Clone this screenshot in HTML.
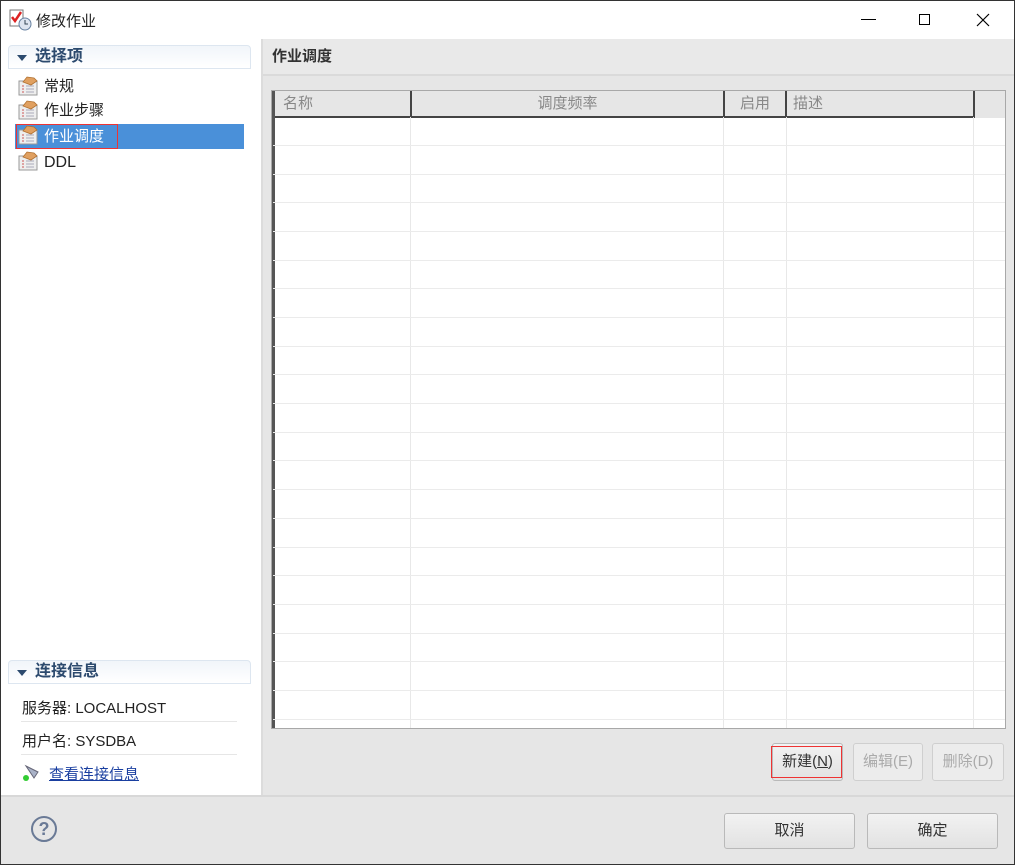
<!DOCTYPE html>
<html><head><meta charset="utf-8"><style>
*{margin:0;padding:0;box-sizing:border-box}
body{width:1015px;height:865px;position:relative;overflow:hidden;background:#fff;font-family:"Liberation Sans","Noto Sans CJK SC",sans-serif;font-size:15px;color:#222}
.a{position:absolute}
.sec{position:absolute;left:8px;width:243px;height:24px;border:1px solid #dde6f0;border-radius:4px 4px 0 0;background:linear-gradient(#f1f5fa,#fff);color:#2c4a6e;font-weight:bold;font-size:16px;padding-left:26px;line-height:22px}
.sec:before{content:"";position:absolute;left:8px;top:9px;border-left:5px solid transparent;border-right:5px solid transparent;border-top:6px solid #2c4a6e}
.it{position:absolute;left:44px;font-size:15px;line-height:20px}
.btn{position:absolute;height:38px;border:1px solid #b9b9b9;border-radius:3px;background:linear-gradient(#f2f2f2,#e2e2e2);text-align:center;line-height:36px;font-size:15px;color:#333}
.dis{background:#ececec;color:#aaa;border-color:#cfcfcf}
.hl{position:absolute;left:273px;width:732px;height:1px;background:#ebebeb}
.vl{position:absolute;top:117px;height:611px;width:1px;background:#e8e8e8}
.th{position:absolute;top:91px;height:27px;background:#e6e6e6;border-right:2px solid #444;border-bottom:2px solid #444;color:#888;font-size:15px;line-height:25px}
</style></head><body>
<div class="a" style="left:0;top:0;width:1015px;height:865px;border:1px solid #333"></div>
<!-- title -->
<svg class="a" style="left:9px;top:9px" width="24" height="22"><rect x="1" y="1" width="13" height="16" fill="#fff" stroke="#777"/><path d="M3 8l3 4 6-9" stroke="#d22" stroke-width="2.5" fill="none"/><circle cx="16" cy="15" r="6" fill="#dde4f0" stroke="#6680a0"/><path d="M16 11v4h3" stroke="#345" fill="none"/></svg>
<div class="a" style="left:36px;top:10px;font-size:15px">修改作业</div>
<div class="a" style="left:861px;top:19px;width:15px;height:1px;background:#000"></div>
<div class="a" style="left:919px;top:14px;width:11px;height:11px;border:1px solid #000"></div>
<svg class="a" style="left:976px;top:13px" width="14" height="14"><path d="M1 1l12 12M13 1L1 13" stroke="#000" stroke-width="1.2"/></svg>
<!-- left pane -->
<div class="sec" style="top:45px">选择项</div>
<svg width="0" height="0" style="position:absolute"><defs><g id="ic"><rect x="1" y="5" width="18" height="14" fill="#eee" stroke="#999"/><path d="M4 10h2M4 13h2M4 16h2" stroke="#c55"/><path d="M8 10h8M8 13h8M8 16h8" stroke="#aab"/><path d="M5 6l4-5 7 1 3 3-6 4z" fill="#e0a060" stroke="#b07030" stroke-width=".8"/></g></defs></svg>
<svg class="a" style="left:18px;top:76px" width="22" height="22"><use href="#ic"/></svg>
<div class="it" style="top:77px">常规</div>
<svg class="a" style="left:18px;top:100px" width="22" height="22"><use href="#ic"/></svg>
<div class="it" style="top:101px">作业步骤</div>
<div class="a" style="left:15px;top:124px;width:229px;height:25px;background:#4a90d9"></div>
<div class="a" style="left:16px;top:124px;width:102px;height:25px;border:1px solid #e33"></div>
<svg class="a" style="left:18px;top:125px" width="22" height="22"><use href="#ic"/></svg>
<div class="it" style="top:127px;color:#fff">作业调度</div>
<svg class="a" style="left:18px;top:151px" width="22" height="22"><use href="#ic"/></svg>
<div class="it" style="top:153px;font-size:16px">DDL</div>
<div class="sec" style="top:660px">连接信息</div>
<div class="a" style="left:22px;top:697px;font-size:15px">服务器: LOCALHOST</div>
<div class="a" style="left:21px;top:721px;width:216px;height:1px;background:#e6e6e6"></div>
<div class="a" style="left:22px;top:730px;font-size:15px">用户名: SYSDBA</div>
<div class="a" style="left:21px;top:754px;width:216px;height:1px;background:#e6e6e6"></div>
<svg class="a" style="left:22px;top:762px" width="22" height="20"><path d="M4 4l12 6-4 6z" fill="#aab3c8" stroke="#667"/><circle cx="4" cy="16" r="3" fill="#3c3"/></svg>
<div class="a" style="left:49px;top:763px;color:#1a3fa0;text-decoration:underline">查看连接信息</div>
<!-- right pane -->
<div class="a" style="left:261px;top:39px;width:753px;height:757px;background:#e6e6e6;border-left:2px solid #dcdcdc"></div>
<div class="a" style="left:263px;top:39px;width:751px;height:37px;background:#e9e9e9;border-bottom:2px solid #dadada"></div>
<div class="a" style="left:272px;top:45px;font-weight:bold;color:#333">作业调度</div>
<div class="a" style="left:271px;top:90px;width:735px;height:639px;background:#fff;border:1px solid #a8a8a8"></div>
<div class="a" style="left:272px;top:91px;width:3px;height:637px;background:#555"></div>
<div class="a" style="left:973px;top:91px;width:32px;height:27px;background:#e6e6e6"></div>
<div class="th" style="left:275px;width:137px;padding-left:8px">名称</div>
<div class="th" style="left:412px;width:313px;text-align:center">调度频率</div>
<div class="th" style="left:725px;width:62px;text-align:center">启用</div>
<div class="th" style="left:787px;width:188px;padding-left:6px">描述</div>
<div class="vl" style="left:410px"></div><div class="vl" style="left:723px"></div><div class="vl" style="left:786px"></div><div class="vl" style="left:973px"></div>
<div class="hl" style="top:145px"></div><div class="hl" style="top:174px"></div><div class="hl" style="top:202px"></div><div class="hl" style="top:231px"></div><div class="hl" style="top:260px"></div><div class="hl" style="top:288px"></div><div class="hl" style="top:317px"></div><div class="hl" style="top:346px"></div><div class="hl" style="top:374px"></div><div class="hl" style="top:403px"></div><div class="hl" style="top:432px"></div><div class="hl" style="top:460px"></div><div class="hl" style="top:489px"></div><div class="hl" style="top:518px"></div><div class="hl" style="top:547px"></div><div class="hl" style="top:575px"></div><div class="hl" style="top:604px"></div><div class="hl" style="top:633px"></div><div class="hl" style="top:661px"></div><div class="hl" style="top:690px"></div><div class="hl" style="top:719px"></div>
<div class="btn" style="left:772px;top:743px;width:71px">新建(<u>N</u>)</div>
<div class="a" style="left:771px;top:746px;width:71px;height:32px;border:1px solid #e33"></div>
<div class="btn dis" style="left:853px;top:743px;width:70px">编辑(E)</div>
<div class="btn dis" style="left:932px;top:743px;width:72px">删除(D)</div>
<!-- bottom -->
<div class="a" style="left:1px;top:795px;width:1013px;height:69px;background:#e6e6e6;border-top:2px solid #d8d8d8"></div>
<div class="a" style="left:31px;top:816px;width:26px;height:26px;border:2px solid #6a7a96;border-radius:50%;text-align:center;font-weight:bold;color:#6a7a96;font-size:18px;line-height:22px">?</div>
<div class="btn" style="left:724px;top:813px;width:131px;height:36px;line-height:34px">取消</div>
<div class="btn" style="left:867px;top:813px;width:131px;height:36px;line-height:34px">确定</div>
</body></html>
